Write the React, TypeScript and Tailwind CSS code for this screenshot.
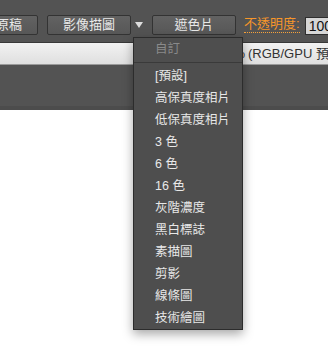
import React from "react";

const items = [
  "[預設]",
  "高保真度相片",
  "低保真度相片",
  "3 色",
  "6 色",
  "16 色",
  "灰階濃度",
  "黑白標誌",
  "素描圖",
  "剪影",
  "線條圖",
  "技術繪圖",
];

const font = { fontFamily: '"Liberation Sans", "Noto Sans CJK TC", sans-serif' };

function ToolButton({ label, className }: { label: string; className: string }) {
  return (
    <div
      className={`flex h-[20px] shrink-0 items-center justify-center whitespace-nowrap rounded-[2px] border border-[#333333] bg-gradient-to-b from-[#626262] to-[#575757] text-[13px] text-[#e8e8e8] ${className}`}
    >
      {label}
    </div>
  );
}

export default function App() {
  return (
    <div className="relative h-[360px] w-[328px] overflow-hidden bg-white" style={font}>
      {/* Control bar */}
      <div className="flex h-[43px] items-start overflow-hidden border-b border-[#383838] bg-[#535353] pt-[15px]">
        <ToolButton label="原稿" className="-ml-[30px] w-[68px] justify-end pr-[15px]" />
        <ToolButton label="影像描圖" className="ml-[9px] w-[84px]" />
        <div className="ml-[4px] flex h-[20px] w-[8px] shrink-0 items-center justify-center">
          <svg width="8" height="6" viewBox="0 0 8 6">
            <path d="M0 0 H8 L4 6 Z" fill="#dddddd" />
          </svg>
        </div>
        <ToolButton label="遮色片" className="ml-[9px] w-[84px]" />
        <span className="ml-[8px] mt-[1px] shrink-0 whitespace-nowrap border-b border-dotted border-[#f7a23a] text-[13px] leading-[16px] text-[#f7962a]">
          不透明度:
        </span>
        <div className="ml-[5px] mt-[2px] flex h-[18px] w-[40px] shrink-0 items-center border border-[#2e2e2e] bg-[#d6d6d6] pl-[3px] text-[14px] text-[#111111]">
          100
        </div>
      </div>

      {/* Document tab */}
      <div className="flex h-[22px] items-center overflow-hidden border-b border-[#9a9a9a] bg-gradient-to-b from-[#f2f2f2] to-[#dfdfdf] text-[13px] text-[#333333]">
        <span className="w-[245px] shrink-0 whitespace-nowrap text-right">100%</span>
        <span className="shrink-0 whitespace-nowrap pl-[3px]">(RGB/GPU 預覽)</span>
      </div>

      {/* Tab strip */}
      <div className="h-[45px] border-b-[4px] border-[#4c4c4c] bg-[#535353]" />

      {/* Dropdown menu */}
      <div className="absolute left-[133px] top-[37px] w-[110px] border border-[#2c2c2c] bg-[#4e4e4e] text-[12.5px] shadow-[0_4px_10px_rgba(0,0,0,0.35)]">
        <div className="flex h-[22px] items-center pl-[21px] text-[#8a8a8a]">自訂</div>
        <div className="flex h-[5px] items-center">
          <div className="h-px w-full bg-[#3a3a3a]" />
        </div>
        {items.map((it) => (
          <div key={it} className="flex h-[22px] items-center pl-[21px] text-[#e8e8e8]">
            {it}
          </div>
        ))}
      </div>
    </div>
  );
}
